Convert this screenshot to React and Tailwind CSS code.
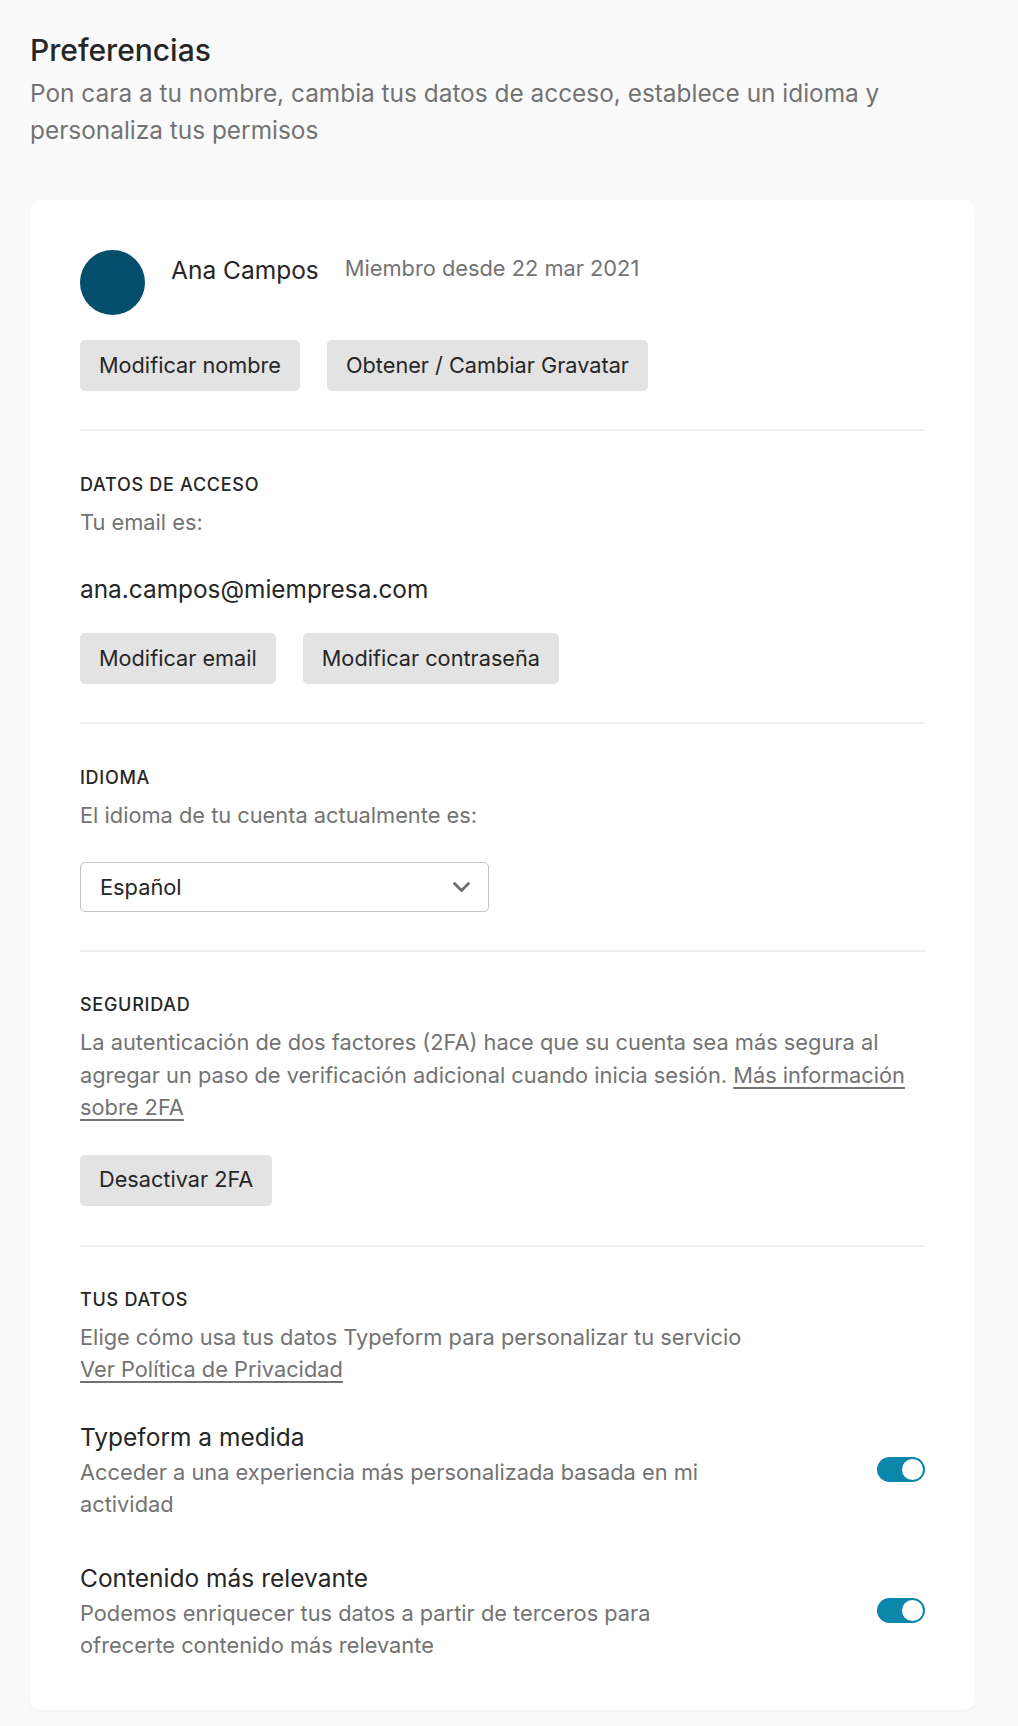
import React from 'react'

const font = { fontFamily: 'Inter, "Noto Sans", sans-serif' }

const GrayButton = ({ children }) => (
  <button className="h-[51px] rounded-[5px] bg-[#e3e3e3] px-[19px] text-[21.7px] leading-none text-[#262626]">
    {children}
  </button>
)

const Label = ({ children }) => (
  <h3 className="text-[18px] leading-6 font-medium uppercase tracking-[0.04em] text-[#262626] mb-[9px]">{children}</h3>
)

const Toggle = () => (
  <div className="w-[48px] h-[25px] rounded-full bg-[#0a87a9] flex items-center justify-end pr-[2px] shrink-0">
    <div className="w-[21px] h-[21px] rounded-full bg-white"></div>
  </div>
)

const Divider = () => <div className="h-[2px] bg-[#efefef]"></div>

export default function App() {
  return (
    <div className="min-h-[1726px] bg-[#fafafa] pl-[30px] pt-[32px] pb-[17px]" style={font}>
      <h1 className="text-[30px] leading-9 font-medium text-[#262626]">Preferencias</h1>
      <p className="mt-[7px] w-[900px] text-[24.4px] leading-[37px] text-[#737373]">
        Pon cara a tu nombre, cambia tus datos de acceso, establece un idioma y personaliza tus permisos
      </p>

      <div className="mt-[51px] w-[945px] rounded-[10px] bg-white px-[50px] pt-[50px] pb-[49px] shadow-[0_1px_3px_rgba(0,0,0,0.06)]">
        {/* Perfil */}
        <div className="flex items-start gap-[26px]">
          <div className="w-[65px] h-[65px] rounded-full bg-[#034e6c] shrink-0"></div>
          <div className="mt-[4px] flex items-start gap-[26px]">
            <span className="text-[24.5px] leading-8 text-[#262626]">Ana Campos</span>
            <span className="text-[21.8px] leading-7 text-[#737373]">Miembro desde 22 mar 2021</span>
          </div>
        </div>
        <div className="mt-[25px] flex gap-[27px]">
          <GrayButton>Modificar nombre</GrayButton>
          <GrayButton>Obtener / Cambiar Gravatar</GrayButton>
        </div>

        <div className="mt-[38px]"><Divider /></div>

        {/* Datos de acceso */}
        <div className="pt-[42px] pb-[38px]">
          <Label>Datos de acceso</Label>
          <p className="text-[21.8px] leading-8 text-[#737373]">Tu email es:</p>
          <p className="mt-[35px] text-[24.4px] leading-8 text-[#262626]">ana.campos@miempresa.com</p>
          <div className="mt-[28px] flex gap-[27px]">
            <GrayButton>Modificar email</GrayButton>
            <GrayButton>Modificar contraseña</GrayButton>
          </div>
        </div>
        <Divider />

        {/* Idioma */}
        <div className="pt-[42px] pb-[38px]">
          <Label>Idioma</Label>
          <p className="text-[21.8px] leading-8 text-[#737373]">El idioma de tu cuenta actualmente es:</p>
          <div className="mt-[31px] w-[409px] h-[50px] rounded-[5px] border border-[#c4c4c4] flex items-center justify-between pl-[19px] pr-[17px]">
            <span className="text-[21.8px] text-[#262626]">Español</span>
            <svg width="19" height="12" viewBox="0 0 19 12" fill="none">
              <path d="M2.5 2.5l7 7 7-7" stroke="#6b6b6b" strokeWidth="2.8" strokeLinecap="round" strokeLinejoin="round" />
            </svg>
          </div>
        </div>
        <Divider />

        {/* Seguridad */}
        <div className="pt-[41px] pb-[39px]">
          <Label>Seguridad</Label>
          <p className="text-[21.8px] leading-[32.5px] text-[#737373]">
            La autenticación de dos factores (2FA) hace que su cuenta sea más segura al agregar un paso de verificación adicional cuando inicia sesión.{' '}
            <a href="#" className="underline underline-offset-4">Más información sobre 2FA</a>
          </p>
          <div className="mt-[31px]">
            <GrayButton>Desactivar 2FA</GrayButton>
          </div>
        </div>
        <Divider />

        {/* Tus datos */}
        <div className="pt-[41px]">
          <Label>Tus datos</Label>
          <p className="text-[21.8px] leading-8 text-[#737373]">
            Elige cómo usa tus datos Typeform para personalizar tu servicio
            <br />
            <a href="#" className="underline underline-offset-4">Ver Política de Privacidad</a>
          </p>

          <div className="mt-[35px] flex flex-col gap-[41px]">
            <div className="flex items-center justify-between">
              <div className="w-[640px]">
                <p className="text-[24.5px] leading-[34px] text-[#262626]">Typeform a medida</p>
                <p className="mt-[2px] text-[21.8px] leading-8 text-[#737373]">Acceder a una experiencia más personalizada basada en mi actividad</p>
              </div>
              <Toggle />
            </div>
            <div className="flex items-center justify-between">
              <div className="w-[640px]">
                <p className="text-[24.5px] leading-[34px] text-[#262626]">Contenido más relevante</p>
                <p className="mt-[2px] text-[21.8px] leading-8 text-[#737373]">Podemos enriquecer tus datos a partir de terceros para ofrecerte contenido más relevante</p>
              </div>
              <Toggle />
            </div>
          </div>
        </div>
      </div>
    </div>
  )
}
